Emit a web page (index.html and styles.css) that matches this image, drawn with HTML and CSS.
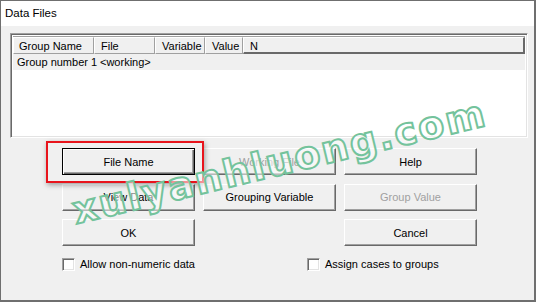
FILE: index.html
```html
<!DOCTYPE html>
<html>
<head>
<meta charset="utf-8">
<link rel="stylesheet" href="styles.css">
</head>
<body>
<div class="window">
  <div class="titlebar">Data Files</div>
  <div class="body">
    <div class="list">
      <div class="header">
        <div class="hcell c1">Group Name</div>
        <div class="hcell c2">File</div>
        <div class="hcell c3">Variable</div>
        <div class="hcell c4">Value</div>
        <div class="hcell c5">N</div>
      </div>
      <div class="row">
        <div class="cell c1">Group number 1</div>
        <div class="cell c2">&lt;working&gt;</div>
      </div>
    </div>
    <div class="buttons">
      <div class="btn default">File Name</div>
      <div class="btn disabled">Working File</div>
      <div class="btn">Help</div>
      <div class="btn">View Data</div>
      <div class="btn">Grouping Variable</div>
      <div class="btn disabled">Group Value</div>
      <div class="btn">OK</div>
      <div class="spacer"></div>
      <div class="btn">Cancel</div>
    </div>
    <div class="checks">
      <label class="check first"><span class="box"></span>Allow non-numeric data</label>
      <label class="check second"><span class="box"></span>Assign cases to groups</label>
    </div>
  </div>
  <div class="highlight"></div>
  <div class="watermark">xulyanhluong.com</div>
</div>
</body>
</html>
```
FILE: styles.css
```css
html, body {
  margin: 0;
  padding: 0;
  background: #ffffff;
}
.window {
  position: relative;
  width: 536px;
  height: 302px;
  box-sizing: border-box;
  border: 1px solid #6f6f6f;
  border-right-width: 2px;
  border-bottom-width: 2px;
  font-family: "Liberation Sans", Arial, sans-serif;
  font-size: 11px;
  color: #000;
  overflow: hidden;
  display: flex;
  flex-direction: column;
}
.titlebar {
  height: 25px;
  background: #ffffff;
  padding-left: 4px;
  line-height: 24px;
  font-size: 11.5px;
  flex: none;
}
.body {
  flex: 1;
  background: #f0f0f0;
  padding: 7px 0 0 9px;
}
.list {
  width: 512px;
  height: 101px;
  border-top: 1px solid #a0a0a0;
  border-left: 1px solid #a0a0a0;
  border-right: 1px solid #ffffff;
  border-bottom: 1px solid #ffffff;
  box-shadow: inset 1px 1px 0 #696969, inset -1px -1px 0 #e3e3e3;
  background: #ffffff;
  padding: 2px 2px 0 2px;
}
.header {
  display: flex;
  height: 18px;
  background: #f0f0f0;
  border-top: 1px solid #a0a0a0;
  box-sizing: border-box;
}
.hcell {
  box-sizing: border-box;
  height: 17px;
  line-height: 16px;
  padding-left: 6px;
  border-top: 1px solid #ffffff;
  border-left: 1px solid #ffffff;
  border-right: 1px solid #a0a0a0;
  border-bottom: 1px solid #a0a0a0;
  white-space: nowrap;
}
.c1 { width: 81px; padding-left: 5px; }
.c2 { width: 61px; }
.c3 { width: 50px; }
.c4 { width: 38px; }
.hcell.c5 {
  flex: 1;
  border-right: 2px solid #696969;
  border-bottom: 2px solid #696969;
}
.row {
  display: flex;
  height: 16px;
  background: #f0f0f0;
  line-height: 16px;
}
.cell {
  box-sizing: border-box;
  padding-left: 6px;
  white-space: nowrap;
}
.row .c1 { padding-left: 4px; }
.buttons {
  display: grid;
  grid-template-columns: 133px 133px 133px;
  grid-template-rows: 27px 27px 27px;
  column-gap: 8px;
  row-gap: 8.5px;
  margin: 10px 0 0 52px;
}
.btn {
  box-sizing: border-box;
  background: #f0f0f0;
  border-top: 1px solid #ffffff;
  border-left: 1px solid #ffffff;
  border-right: 1px solid #696969;
  border-bottom: 1px solid #696969;
  box-shadow: inset -1px -1px 0 #a0a0a0, inset 1px 1px 0 #f0f0f0;
  display: flex;
  align-items: center;
  justify-content: center;
  color: #000;
}
.btn.default {
  border: 1px solid #000000;
  box-shadow: inset 1px 1px 0 #ffffff, inset -1px -1px 0 #696969, inset -2px -2px 0 #a0a0a0;
}
.btn.disabled {
  color: #a0a0a0;
}
.checks {
  position: relative;
  display: flex;
  margin: 11px 0 0 52px;
  height: 14px;
}
.check {
  display: flex;
  align-items: center;
  gap: 5px;
  white-space: nowrap;
}
.check.second {
  margin-left: 112px;
}
.box {
  box-sizing: border-box;
  width: 13px;
  height: 13px;
  background: #ffffff;
  border-top: 1px solid #a0a0a0;
  border-left: 1px solid #a0a0a0;
  border-right: 1px solid #ffffff;
  border-bottom: 1px solid #ffffff;
  box-shadow: inset 1px 1px 0 #696969, inset -1px -1px 0 #e3e3e3;
  flex: none;
}
.highlight {
  position: absolute;
  left: 45px;
  top: 140px;
  width: 158px;
  height: 42px;
  box-sizing: border-box;
  border: 2.5px solid #e8141c;
  box-shadow: 1px 2px 5px rgba(0, 0, 0, 0.35);
}
.watermark {
  position: absolute;
  left: 75px;
  top: 191px;
  font-family: "DejaVu Sans", sans-serif;
  font-weight: bold;
  font-size: 38px;
  line-height: 38px;
  letter-spacing: 2px;
  color: rgba(255, 255, 255, 0.55);
  -webkit-text-stroke: 2px #74c39c;
  transform: rotate(-13.5deg);
  transform-origin: 0 80%;
  white-space: nowrap;
  pointer-events: none;
}
```
